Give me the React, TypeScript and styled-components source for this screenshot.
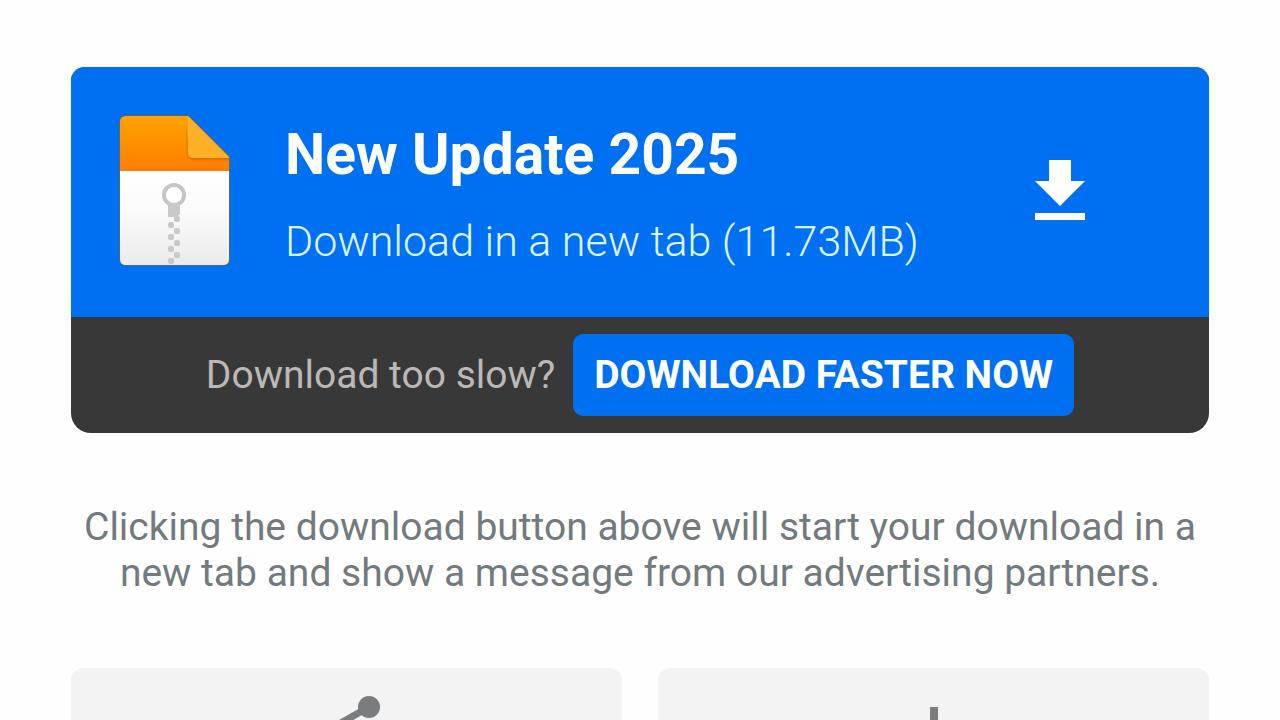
import React from "react";
import styled, { createGlobalStyle } from "styled-components";

const blue = "#0070f2";
const grey = "#727a7e";

const GlobalStyle = createGlobalStyle`
  *, *::before, *::after { box-sizing: border-box; }
  body {
    margin: 0;
    background: #fefefe;
    font-family: Roboto, "Liberation Sans", sans-serif;
  }
`;

const Page = styled.main`
  height: 100vh;
  overflow: hidden;
  padding: 67px 71px 0;
`;

const DownloadCard = styled.section`
  border-radius: 14px 14px 20px 20px;
  overflow: hidden;
  background: #383838;
`;

const DownloadLink = styled.a`
  display: flex;
  align-items: center;
  min-height: 250px;
  padding: 0 124px 4px 44px;
  background: ${blue};
  color: #fff;
  text-decoration: none;
`;

const FileIcon = styled.svg`
  flex: none;
  width: 118px;
  height: 156px;
`;

const FileText = styled.span`
  flex: 1;
  display: flex;
  flex-direction: column;
  gap: 14px;
  margin-left: 52px;
  padding-top: 16px;
`;

const FileName = styled.strong`
  font-size: 57px;
  font-weight: 700;
  line-height: 72px;
`;

const FileMeta = styled.span`
  font-size: 43px;
  font-weight: 300;
  line-height: 72px;
  color: #dcf4ff;
`;

const ArrowIcon = styled.svg`
  flex: none;
  width: 50px;
  height: 60px;
  fill: #fff;
`;

const SpeedBar = styled.div`
  display: flex;
  align-items: center;
  justify-content: center;
  gap: 18px;
  min-height: 116px;
  font-size: 39px;
`;

const SpeedQuestion = styled.span`
  color: #bcb8b8;
`;

const FasterButton = styled.button`
  height: 82px;
  padding: 0 21px;
  border: 0;
  border-radius: 10px;
  background: ${blue};
  color: #fff;
  font: 700 39px/46px Roboto, "Liberation Sans", sans-serif;
  white-space: nowrap;
  cursor: pointer;
`;

const Notice = styled.p`
  margin: 71px 0 72px;
  font-size: 39px;
  line-height: 46px;
  text-align: center;
  color: ${grey};
`;

const Actions = styled.div`
  display: grid;
  grid-template-columns: 1fr 1fr;
  gap: 36px;
`;

const ActionButton = styled.button`
  display: flex;
  justify-content: center;
  height: 180px;
  padding: 28px 0 0;
  border: 0;
  border-radius: 12px;
  background: #f3f3f3;
  color: #7a7c7e;
  cursor: pointer;
`;

const ActionIcon = styled.svg`
  width: 66px;
  height: 72px;
`;

const teeth = [0, 1, 2, 3, 4, 5, 6, 7];

function ZipFile() {
  return (
    <FileIcon viewBox="0 0 118 156" aria-hidden="true">
      <defs>
        <linearGradient id="cover" x1="0" y1="0" x2="0" y2="1">
          <stop offset="0" stopColor="#ffa300" />
          <stop offset="1" stopColor="#ff7d00" />
        </linearGradient>
        <linearGradient id="paper" x1="0" y1="0" x2="0" y2="1">
          <stop offset="0" stopColor="#ffffff" />
          <stop offset="0.4" stopColor="#fbfbfb" />
          <stop offset="1" stopColor="#ebebeb" />
        </linearGradient>
        <linearGradient id="shade" x1="0" y1="0" x2="0" y2="1">
          <stop offset="0" stopColor="#b86400" stopOpacity="0.75" />
          <stop offset="1" stopColor="#ff8200" stopOpacity="0" />
        </linearGradient>
      </defs>
      <path
        d="M5 59V10Q5 4 11 4H73L114 45V147Q114 153 108 153H11Q5 153 5 147Z"
        fill="none"
        stroke="#56657a"
        strokeWidth="2"
      />
      <path d="M5 59V10Q5 4 11 4H73L114 45V59Z" fill="url(#cover)" />
      <path d="M5 59H114V147Q114 153 108 153H11Q5 153 5 147Z" fill="url(#paper)" />
      <path d="M74 46H114V51H80Z" fill="url(#shade)" />
      <path d="M71 12V40Q71 48 79 48L74 42Z" fill="#d07800" opacity="0.45" />
      <path d="M73 4L114 45V46H79Q73 46 73 40Z" fill="#ffb027" />
      <circle cx="59" cy="83" r="10" fill="#fff" stroke="#c4c6c6" strokeWidth="4" />
      <path d="M53 91H65V102L62 105H53Z" fill="#c7cac8" />
      {teeth.map((n) => (
        <rect
          key={n}
          x={n % 2 ? 53 : 59}
          y={104 + n * 6}
          width="6"
          height="6"
          rx="2"
          fill="#c8cac9"
        />
      ))}
    </FileIcon>
  );
}

export default function App() {
  return (
    <Page>
      <GlobalStyle />
      <DownloadCard>
        <DownloadLink href="#download">
          <ZipFile />
          <FileText>
            <FileName>New Update 2025</FileName>
            <FileMeta>Download in a new tab (11.73MB)</FileMeta>
          </FileText>
          <ArrowIcon viewBox="0 0 50 60" aria-hidden="true">
            <path d="M14 0H36V21H50L25 46L0 21H14ZM0 53H50V60H0Z" />
          </ArrowIcon>
        </DownloadLink>
        <SpeedBar>
          <SpeedQuestion>Download too slow?</SpeedQuestion>
          <FasterButton type="button">DOWNLOAD FASTER NOW</FasterButton>
        </SpeedBar>
      </DownloadCard>
      <Notice>
        Clicking the download button above will start your download in a new tab and show a message
        from our advertising partners.
      </Notice>
      <Actions>
        <ActionButton type="button" aria-label="Share">
          <ActionIcon viewBox="0 0 66 72" aria-hidden="true" fill="currentColor">
            <path d="M55 11L11 36L55 61" fill="none" stroke="currentColor" strokeWidth="7" />
            <circle cx="55" cy="11" r="11" />
            <circle cx="11" cy="36" r="11" />
            <circle cx="55" cy="61" r="11" />
          </ActionIcon>
        </ActionButton>
        <ActionButton type="button" aria-label="Add">
          <ActionIcon viewBox="0 0 66 72" aria-hidden="true">
            <path d="M33 11V61M8 36H58" stroke="currentColor" strokeWidth="8" />
          </ActionIcon>
        </ActionButton>
      </Actions>
    </Page>
  );
}
